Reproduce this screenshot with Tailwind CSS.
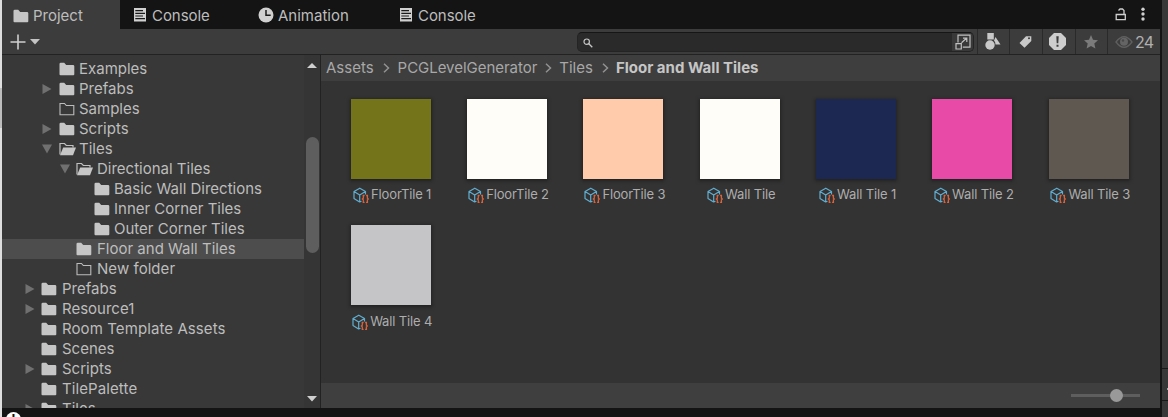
<!DOCTYPE html>
<html lang="en">
<head>
<meta charset="utf-8">
<title>Project</title>
<script src="https://cdn.jsdelivr.net/npm/@tailwindcss/browser@4"></script>
</head>
<body class="h-[417px] w-[1168px] overflow-hidden bg-[#141414] font-['Inter',sans-serif] text-[15px] text-[#bdbdbd]">
<svg class="hidden">
  <symbol id="folder" viewBox="0 0 16 14"><path fill="#c6c6c6" d="M.5 2Q.5.7 1.800.7H5.200L7.200 3H14Q15.300 3 15.300 4.300V12.300Q15.300 13.300 14.300 13.300H1.500Q.5 13.300.5 12.300Z"/></symbol>
  <symbol id="folder-empty" viewBox="0 0 16 14"><path fill="none" stroke="#bcbcbc" stroke-width="1.100" d="M1 1.500H5.500L7.300 3.500H14.800V12.700H1Z"/></symbol>
  <symbol id="folder-open" viewBox="0 0 18 14"><path fill="none" stroke="#c0c0c0" stroke-width="1.200" d="M1 12.500V1.500H5.500L7.300 3.500H14V5.500"/><path fill="#c6c6c6" d="M4.200 5.600H17L14 13.200H1Z"/></symbol>
  <symbol id="right" viewBox="0 0 10 10"><path fill="#707070" d="M.5 0V10L9.500 5Z"/></symbol>
  <symbol id="down" viewBox="0 0 10 10"><path fill="#707070" d="M0 .5H10L5 9.500Z"/></symbol>
  <symbol id="console" viewBox="0 0 12 14"><path fill="#d0d0d0" d="M0 0H12V13.500H0Z"/><path stroke="#1a1a1a" stroke-width="1.200" d="M1.300 2.700H9M1.300 5.300H11M1.300 8H9M1.300 10.700H11"/></symbol>
  <symbol id="asset" viewBox="0 0 16 16"><g fill="none" stroke="#62aed0" stroke-width="1.200" stroke-linejoin="round"><path d="M8.500 14.200L6.600 15L1 11.600V4.600L6.800 1.200L12.500 4.400V7.500M1 4.600L6.700 7.900L12.500 4.400M6.700 7.900V14.500"/></g><g fill="none" stroke="#d9633c" stroke-width="1.300"><path d="M11.600 8.500H10.300V11.300L9.400 12L10.300 12.700V15.500H11.600M13.100 8.500H14.400V11.300L15.300 12L14.400 12.700V15.500H13.100"/></g></symbol>
</svg>
<div class="flex h-full">
  <div class="w-[2px] bg-[#dedede] pt-[88px]"><div class="h-10 bg-[#bdbdbd]"></div></div>
  <main class="flex w-[1158px] flex-col">
    <header class="flex h-[29px]">
      <div class="flex w-[118px] items-center bg-[#3c3c3c] pt-[2px] pl-[11px]"><svg class="h-[14px] w-4"><use href="#folder"/></svg><span class="mt-px ml-1">Project</span></div>
      <div class="flex w-[124px] items-center pt-[2px] pl-[14px]"><svg class="mb-px h-[14px] w-3"><use href="#console"/></svg><span class="mt-px ml-[6px] tracking-[-.04px]">Console</span></div>
      <div class="flex w-[142px] items-center pt-[2px] pl-[14px]"><svg class="mb-px h-4 w-4" viewBox="0 0 16 16"><circle cx="8" cy="8" r="7.500" fill="#d0d0d0"/><path fill="none" stroke="#1a1a1a" stroke-width="1.500" d="M8 3V8.300H12.700"/></svg><span class="mt-px ml-1">Animation</span></div>
      <div class="flex items-center pt-[2px] pl-[14px]"><svg class="mb-px h-[14px] w-3"><use href="#console"/></svg><span class="mt-px ml-[6px] tracking-[-.04px]">Console</span></div>
      <div class="ml-auto flex items-center gap-[14px] pr-[15px]">
        <svg class="mb-px h-[14px] w-3" viewBox="0 0 12 14"><path fill="none" stroke="#d0d0d0" stroke-width="1.300" d="M1.200 7.500H10.300V12.600H1.200ZM9 7.500V3.500L7.500 2H5L3.500 3.500"/></svg>
        <svg class="mb-px h-[14px] w-1" viewBox="0 0 4 14"><g fill="#d0d0d0"><circle cx="2" cy="2.200" r="1.700"/><circle cx="2" cy="7" r="1.700"/><circle cx="2" cy="12" r="1.700"/></g></svg>
      </div>
    </header>
    <div class="flex h-[26px] border-b border-[#222] bg-[#3c3c3c]">
      <svg class="mt-[5px] ml-2 h-4 w-4" viewBox="0 0 16 16"><path stroke="#cfcfcf" stroke-width="1.600" d="M.5 8H15.500M8 .5V15.500"/></svg>
      <svg class="mt-[10px] ml-1 h-[6px] w-[10px]" viewBox="0 0 10 6"><path fill="#c4c4c4" d="M0 0H10L5 5.500Z"/></svg>
      <div class="mt-[3px] ml-auto flex h-5 w-[397px] justify-between overflow-hidden rounded-[5px] border border-t-[#161616] border-[#242424] bg-[#2a2a2a]">
        <svg class="mt-[5px] ml-[5px] h-[10px] w-[10px]" viewBox="0 0 10 10"><circle cx="3.700" cy="3.700" r="2.700" fill="none" stroke="#c6c6c6" stroke-width="1.200"/><path stroke="#c6c6c6" stroke-width="1.300" d="M5.500 5.500L9.300 9.300"/></svg>
        <div class="w-[21px] bg-[#393939]"><svg class="mt-px ml-[3px] h-4 w-4" viewBox="0 0 16 16"><g fill="none" stroke="#c0c0c0" stroke-width="1.200"><path d="M3 8.500V1.200H15V13.200H7.800"/><path d="M1 9.700H6.300V15H1ZM6.500 8.700L11.500 4.200M8 4.200H11.800V8"/></g></svg></div>
      </div>
      <div class="ml-[3px] flex">
        <div class="flex w-8 border-l border-[#2a2a2a]"><svg class="mt-1 ml-[7px] h-[17px] w-4" viewBox="0 0 16 17"><g fill="#c8c8c8"><path d="M2.300 0H8.800V6.500H2.300Z"/><circle cx="5" cy="12" r="4.700"/><path d="M10.500 4L15.500 11.500H10.500Q10.500 9 9 7.500Z"/></g></svg></div>
        <div class="flex w-[33px] border-l border-[#2a2a2a]"><svg class="mt-[6px] ml-[9px] h-[14px] w-[14px]" viewBox="0 0 14 14"><path fill="#c8c8c8" fill-rule="evenodd" d="M7 1.200H12.300V6L5.500 12.800L.5 8ZM9 3.300A1 1 0 1 0 11 3.300A1 1 0 1 0 9 3.300Z"/></svg></div>
        <div class="flex w-[33px] border-l border-[#2a2a2a]"><svg class="mt-1 ml-[6px] h-[17px] w-[17px]" viewBox="0 0 17 17"><path fill="#cdcdcd" d="M5 0H12L17 5V12L12 17H5L0 12V5Z"/><path fill="#3c3c3c" d="M7.300 3.200H9.700L9.300 10.200H7.700ZM7.500 11.700H9.500V13.700H7.500Z"/></svg></div>
        <div class="flex w-8 border-l border-[#2a2a2a]"><svg class="mt-[6px] ml-2 h-[14px] w-[14px]" viewBox="0 0 14 14"><path fill="#7b7b7b" d="M7 0L9 4.800L14 5.300L10.300 8.600L11.400 13.600L7 11L2.600 13.600L3.700 8.600L0 5.300L5 4.800Z"/></svg></div>
        <div class="flex w-[53px] border-l border-[#2a2a2a]"><svg class="mt-[7px] ml-[7px] h-3 w-[18px]" viewBox="0 0 18 12"><path fill="none" stroke="#5f5f5f" stroke-width="1.300" d="M1 6Q9-4.500 17 6Q9 16.500 1 6Z"/><circle cx="9" cy="5.700" r="4" fill="#646464"/><circle cx="8" cy="4.500" r="1.200" fill="#484848"/></svg><span class="mt-px ml-[2px] text-base leading-6 tracking-[-.8px] text-[#b0b0b0]">24</span></div>
      </div>
    </div>
    <div class="flex h-[353px]">
      <nav class="h-full w-[302px] overflow-hidden bg-[#383838] pt-1 leading-5 whitespace-nowrap">
        <div class="flex h-5 items-center pl-[57px]"><svg class="h-[14px] w-4"><use href="#folder"/></svg><span class="ml-1">Examples</span></div>
        <div class="flex h-5 items-center pl-10"><svg class="mr-[7px] h-[10px] w-[10px]"><use href="#right"/></svg><svg class="h-[14px] w-4"><use href="#folder"/></svg><span class="ml-1">Prefabs</span></div>
        <div class="flex h-5 items-center pl-[57px]"><svg class="h-[14px] w-4"><use href="#folder-empty"/></svg><span class="ml-1">Samples</span></div>
        <div class="flex h-5 items-center pl-10"><svg class="mr-[7px] h-[10px] w-[10px]"><use href="#right"/></svg><svg class="h-[14px] w-4"><use href="#folder"/></svg><span class="ml-1">Scripts</span></div>
        <div class="flex h-5 items-center pl-10"><svg class="mr-[7px] h-[10px] w-[10px]"><use href="#down"/></svg><svg class="h-[14px] w-[18px]"><use href="#folder-open"/></svg><span class="ml-[2px]">Tiles</span></div>
        <div class="flex h-5 items-center pl-[58px]"><svg class="mr-[6px] h-[10px] w-[10px]"><use href="#down"/></svg><svg class="h-[14px] w-[18px]"><use href="#folder-open"/></svg><span class="ml-[3px]">Directional Tiles</span></div>
        <div class="flex h-5 items-center pl-[92px]"><svg class="h-[14px] w-4"><use href="#folder"/></svg><span class="ml-1">Basic Wall Directions</span></div>
        <div class="flex h-5 items-center pl-[92px]"><svg class="h-[14px] w-4"><use href="#folder"/></svg><span class="ml-1">Inner Corner Tiles</span></div>
        <div class="flex h-5 items-center pl-[92px]"><svg class="h-[14px] w-4"><use href="#folder"/></svg><span class="ml-1">Outer Corner Tiles</span></div>
        <div class="flex h-5 items-center bg-[#4d4d4d] pl-[74px]"><svg class="h-[14px] w-4"><use href="#folder"/></svg><span class="ml-[5px]">Floor and Wall Tiles</span></div>
        <div class="flex h-5 items-center pl-[74px]"><svg class="h-[14px] w-4"><use href="#folder-empty"/></svg><span class="ml-[5px] tracking-[.05px]">New folder</span></div>
        <div class="flex h-5 items-center pl-[23px]"><svg class="mr-[6px] h-[10px] w-[10px]"><use href="#right"/></svg><svg class="h-[14px] w-4"><use href="#folder"/></svg><span class="ml-[5px]">Prefabs</span></div>
        <div class="flex h-5 items-center pl-[23px]"><svg class="mr-[6px] h-[10px] w-[10px]"><use href="#right"/></svg><svg class="h-[14px] w-4"><use href="#folder"/></svg><span class="ml-[5px]">Resource1</span></div>
        <div class="flex h-5 items-center pl-[39px]"><svg class="h-[14px] w-4"><use href="#folder"/></svg><span class="ml-[5px] tracking-[.09px]">Room Template Assets</span></div>
        <div class="flex h-5 items-center pl-[39px]"><svg class="h-[14px] w-4"><use href="#folder"/></svg><span class="ml-[5px]">Scenes</span></div>
        <div class="flex h-5 items-center pl-[23px]"><svg class="mr-[6px] h-[10px] w-[10px]"><use href="#right"/></svg><svg class="h-[14px] w-4"><use href="#folder"/></svg><span class="ml-[5px]">Scripts</span></div>
        <div class="flex h-5 items-center pl-[39px]"><svg class="h-[14px] w-4"><use href="#folder"/></svg><span class="ml-[5px] tracking-[.1px]">TilePalette</span></div>
        <div class="flex h-5 items-center pl-[23px]"><svg class="mr-[6px] h-[10px] w-[10px]"><use href="#right"/></svg><svg class="h-[14px] w-4"><use href="#folder"/></svg><span class="ml-[5px]">Tiles</span></div>
      </nav>
      <div class="flex w-4 flex-col items-center bg-[#353535]">
        <svg class="mt-2 h-[5px] w-[10px]" viewBox="0 0 10 5"><path fill="#d0d0d0" d="M0 5H10L5 0Z"/></svg>
        <div class="mt-[69px] h-[116px] w-[13px] rounded-full bg-[#5e5e5e]"></div>
        <svg class="mt-auto mb-[6px] h-[6px] w-[10px]" viewBox="0 0 10 6"><path fill="#d0d0d0" d="M0 0H10L5 5.500Z"/></svg>
      </div>
      <section class="flex w-[840px] flex-col border-l border-[#222] bg-[#333]">
        <div class="flex h-[26px] items-center bg-[#3e3e3e] pl-[5px] text-[#a8a8a8]">
          <span>Assets</span><svg class="mx-2 h-[10px] w-2" viewBox="0 0 8 10"><path fill="none" stroke="#929292" stroke-width="1.500" d="M2 .7L6.500 5L2 9.300"/></svg>
          <span class="tracking-[-.03px]">PCGLevelGenerator</span><svg class="mr-[7px] ml-[7px] h-[10px] w-2" viewBox="0 0 8 10"><path fill="none" stroke="#929292" stroke-width="1.500" d="M2 .7L6.500 5L2 9.300"/></svg>
          <span>Tiles</span><svg class="mr-[7px] ml-2 h-[10px] w-2" viewBox="0 0 8 10"><path fill="none" stroke="#929292" stroke-width="1.500" d="M2 .7L6.500 5L2 9.300"/></svg>
          <span class="font-bold text-[#c6c6c6]">Floor and Wall Tiles</span>
        </div>
        <div class="grid h-[302px] auto-rows-[126px] grid-cols-[repeat(7,116.35px)] pt-[18px] pl-[11.5px] text-[13px] tracking-[-.15px] text-[#adadad]">
          <div class="flex flex-col items-center"><div class="size-20 bg-[#74751a] shadow-[0_1px_3px_1px_#222]"></div><div class="mt-2 ml-[3px] flex h-4 items-center gap-[2px]"><svg class="size-4"><use href="#asset"/></svg><span>FloorTile 1</span></div></div>
          <div class="flex flex-col items-center"><div class="size-20 bg-[#fffdf8] shadow-[0_1px_3px_1px_#222]"></div><div class="mt-2 ml-[3px] flex h-4 items-center gap-[2px]"><svg class="size-4"><use href="#asset"/></svg><span>FloorTile 2</span></div></div>
          <div class="flex flex-col items-center"><div class="size-20 bg-[#ffcbab] shadow-[0_1px_3px_1px_#222]"></div><div class="mt-2 ml-[3px] flex h-4 items-center gap-[2px]"><svg class="size-4"><use href="#asset"/></svg><span>FloorTile 3</span></div></div>
          <div class="flex flex-col items-center"><div class="size-20 bg-[#fffdf8] shadow-[0_1px_3px_1px_#222]"></div><div class="mt-2 ml-[3px] flex h-4 items-center gap-[2px]"><svg class="size-4"><use href="#asset"/></svg><span>Wall Tile</span></div></div>
          <div class="flex flex-col items-center"><div class="size-20 bg-[#1c2851] shadow-[0_1px_3px_1px_#222]"></div><div class="mt-2 ml-[3px] flex h-4 items-center gap-[2px]"><svg class="size-4"><use href="#asset"/></svg><span>Wall Tile 1</span></div></div>
          <div class="flex flex-col items-center"><div class="size-20 bg-[#e84aa8] shadow-[0_1px_3px_1px_#222]"></div><div class="mt-2 ml-[3px] flex h-4 items-center gap-[2px]"><svg class="size-4"><use href="#asset"/></svg><span>Wall Tile 2</span></div></div>
          <div class="flex flex-col items-center"><div class="size-20 bg-[#5f5850] shadow-[0_1px_3px_1px_#222]"></div><div class="mt-2 ml-[3px] flex h-4 items-center gap-[2px]"><svg class="size-4"><use href="#asset"/></svg><span>Wall Tile 3</span></div></div>
          <div class="flex flex-col items-center"><div class="size-20 bg-[#c5c5c7] shadow-[0_1px_3px_1px_#222]"></div><div class="mt-[9px] ml-[3px] flex h-4 items-center gap-[2px]"><svg class="size-4"><use href="#asset"/></svg><span>Wall Tile 4</span></div></div>
        </div>
        <div class="flex h-[25px] items-center justify-end bg-[#3f3f3f] pr-5">
          <div class="flex h-[3px] w-[69px] items-center bg-[#5e5e5e] pl-[39px]"><div class="size-[13px] shrink-0 rounded-full bg-[#999]"></div></div>
        </div>
      </section>
    </div>
    <footer class="flex h-[9px] overflow-hidden pt-1 pl-1"><div class="h-[15px] w-[15px] shrink-0 rounded-full bg-white text-center text-[13px] leading-[15px] font-bold text-[#141414]">!</div></footer>
  </main>
  <aside class="ml-[2px] flex w-[6px] flex-col bg-[#383838] pt-[368px]"><div class="h-[33px] border-y border-[#181818] pt-[19px] pl-[5px]"><div class="h-[2px] w-px bg-[#aaa]"></div></div></aside>
</div>
</body>
</html>
